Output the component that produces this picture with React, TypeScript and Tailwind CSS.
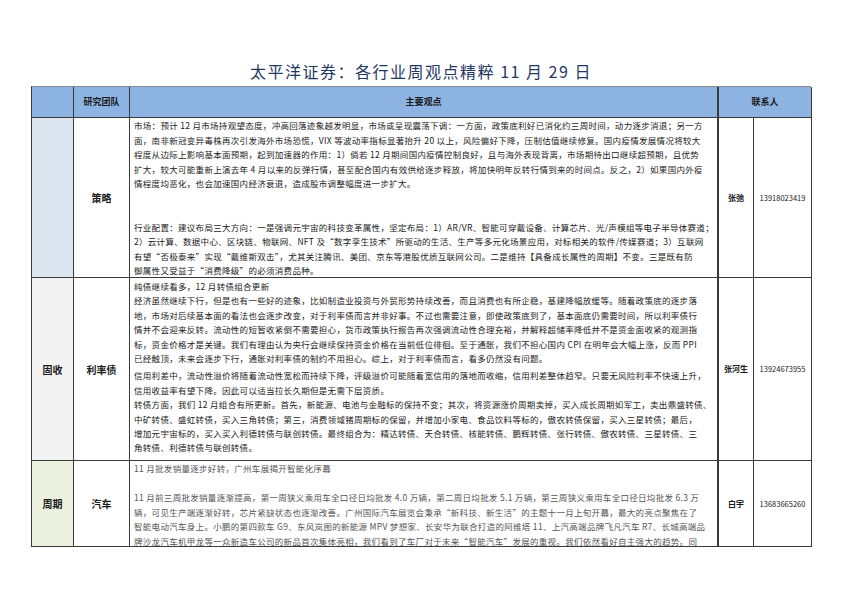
const strategyA = [
  "市场：预计 12 月市场持观望态度，冲高回落迹象越发明显，市场或呈现震荡下调：一方面，政策底利好已消化约三周时间，动力逐步消退；另一方",
  "面，南非新冠变异毒株再次引发海外市场恐慌，VIX 等波动率指标显著抬升 20 以上，风险偏好下降，压制估值继续修复。国内疫情发展情况将较大",
  "程度从边际上影响基本面预期，起到加速器的作用：1）倘若 12 月期间国内疫情控制良好，且与海外表现背离，市场期待出口继续超预期，且优势",
  "扩大，较大可能重新上演去年 4 月以来的反弹行情，甚至配合国内有效供给逐步释放，将加快明年反转行情到来的时间点。反之，2）如果国内外疫",
  "情程度均恶化，也会加速国内经济衰退，造成股市调整幅度进一步扩大。",
];

const strategyB = [
  "行业配置：建议布局三大方向：一是强调元宇宙的科技变革属性，坚定布局：1）AR/VR、智能可穿戴设备、计算芯片、光/声模组等电子半导体赛道；",
  "2）云计算、数据中心、区块链、物联网、NFT 及“数字孪生技术”所驱动的生活、生产等多元化场景应用，对标相关的软件/传媒赛道；3）互联网",
  "有望“否极泰来”实现“戴维斯双击”，尤其关注腾讯、美团、京东等港股优质互联网公司。二是维持【具备成长属性的周期】不变。三是既有防",
  "御属性又受益于“消费降级”的必须消费品种。",
];

const ratesA = [
  "纯债继续看多，12 月转债组合更新",
  "经济虽然继续下行，但是也有一些好的迹象，比如制造业投资与外贸形势持续改善，而且消费也有所企稳，基建降幅放缓等。随着政策底的逐步落",
  "地，市场对后续基本面的看法也会逐步改变，对于利率债而言并非好事。不过也需要注意，即使政策底到了，基本面底仍需要时间，所以利率债行",
  "情并不会迎来反转。流动性的短暂收紧倒不需要担心，货币政策执行报告再次强调流动性合理充裕，并解释超储率降低并不是资金面收紧的观测指",
  "标，资金价格才是关键。我们有理由认为央行会继续保持资金价格在当前低位徘徊。至于通胀，我们不担心国内 CPI 在明年会大幅上涨，反而 PPI",
  "已经触顶，未来会逐步下行，通胀对利率债的制约不用担心。综上，对于利率债而言，看多仍然没有问题。",
];

const ratesB = [
  "信用利差中，流动性溢价将随着流动性宽松而持续下降，评级溢价可能随着宽信用的落地而收缩，信用利差整体趋窄。只要无风险利率不快速上升，",
  "信用收益率有望下降。因此可以适当拉长久期但是无需下层资质。",
  "转债方面，我们 12 月组合有所更新。首先，新能源、电池与金融标的保持不变；其次，将资源涨价周期卖掉，买入成长周期如军工，卖出鼎盛转债、",
  "中矿转债、盛虹转债，买入三角转债；第三，消费领域猪周期标的保留，并增加小家电、食品饮料等标的，傲农转债保留，买入三星转债；最后，",
  "增加元宇宙标的，买入买入利德转债与联创转债。最终组合为：精达转债、天合转债、核能转债、鹏辉转债、张行转债、傲农转债、三星转债、三",
  "角转债、利德转债与联创转债。",
];

const autoA = ["11 月批发销量逐步好转，广州车展揭开智能化序幕"];

const autoB = [
  "11 月前三周批发销量逐渐提高，第一周狭义乘用车全口径日均批发 4.0 万辆，第二周日均批发 5.1 万辆，第三周狭义乘用车全口径日均批发 6.3 万",
  "辆，可见生产端逐渐好转，芯片紧缺状态也逐渐改善。广州国际汽车展览会秉承“新科技、新生活”的主题十一月上旬开幕，最大的亮点聚焦在了",
  "智能电动汽车身上。小鹏的第四款车 G9、东风岚图的新能源 MPV 梦想家、长安华为联合打造的阿维塔 11、上汽高端品牌飞凡汽车 R7、长城高端品",
  "牌沙龙汽车机甲龙等一众新造车公司的新品首次集体亮相，我们看到了车厂对于未来“智能汽车”发展的重视。我们依然看好自主强大的趋势。同",
];

function Lines({ lines }: { lines: string[] }) {
  return (
    <>
      {lines.map((l, i) => (
        <div key={i} className="whitespace-nowrap">
          {l}
        </div>
      ))}
    </>
  );
}

const cell = "border-r border-b border-[#3a3a3a]";
const body = "pl-[4px] text-[8.5px] tracking-[0.3px]";

export default function App() {
  return (
    <div className="w-[842px] h-[595px] bg-white overflow-hidden font-['Noto_Sans_CJK_SC',sans-serif] text-[#1a1a1a]">
      <div className="h-[86px] flex items-end justify-center pb-[4px]">
        <h1 className="text-[16px] leading-[22px] tracking-[1.5px] text-[#1f3864]">
          太平洋证券：各行业周观点精粹 11 月 29 日
        </h1>
      </div>

      <div className="ml-[31px] w-[780px] grid grid-cols-[42px_56px_589px_35px_58px] border-l border-t border-l-[#3a3a3a] border-t-[#8a8a8a]">
        {/* header */}
        <div className={`${cell} h-[31px] bg-[#8db3e2]`} />
        <div className={`${cell} bg-[#8db3e2] flex items-center justify-center text-[9px] font-bold`}>
          研究团队
        </div>
        <div className={`${cell} border-r-2 bg-[#8db3e2] flex items-center justify-center text-[9px] font-bold`}>
          主要观点
        </div>
        <div className={`${cell} col-span-2 bg-[#8db3e2] flex items-center justify-center text-[9px] font-bold`}>
          联系人
        </div>

        {/* strategy */}
        <div className={`${cell} bg-[#dce6f1]`} />
        <div className={`${cell} flex items-center justify-center text-[10px] font-bold`}>策略</div>
        <div className={`${cell} ${body} border-r-2 h-[160px] leading-[14.5px]`}>
          <Lines lines={strategyA} />
          <div className="h-[29px]" />
          <Lines lines={strategyB} />
        </div>
        <div className={`${cell} flex items-center justify-center text-[8px] font-bold`}>张弛</div>
        <div className={`${cell} flex items-center justify-center text-[7.5px]`}>13918023419</div>

        {/* rates */}
        <div className={`${cell} bg-[#f2f2f2] flex items-center justify-center text-[10px] font-bold`}>固收</div>
        <div className={`${cell} flex items-center justify-center text-[10px] font-bold`}>利率债</div>
        <div className={`${cell} ${body} border-r-2 h-[183px] pt-[1px] leading-[14.4px]`}>
          <Lines lines={ratesA} />
          <div className="h-[3px]" />
          <Lines lines={ratesB} />
        </div>
        <div className={`${cell} flex items-center justify-center text-[8px] font-bold`}>张河生</div>
        <div className={`${cell} flex items-center justify-center text-[7.5px]`}>13924673955</div>

        {/* cycle */}
        <div className={`${cell} bg-[#ebf1de] flex items-center justify-center text-[10px] font-bold`}>周期</div>
        <div className={`${cell} flex items-center justify-center text-[10px] font-bold`}>汽车</div>
        <div className={`${cell} ${body} border-r-2 h-[86px] overflow-hidden leading-[14.5px] text-[#555]`}>
          <Lines lines={autoA} />
          <div className="h-[14.5px]" />
          <Lines lines={autoB} />
        </div>
        <div className={`${cell} flex items-center justify-center text-[8px] font-bold`}>白宇</div>
        <div className={`${cell} flex items-center justify-center text-[7.5px]`}>13683665260</div>
      </div>
    </div>
  );
}
